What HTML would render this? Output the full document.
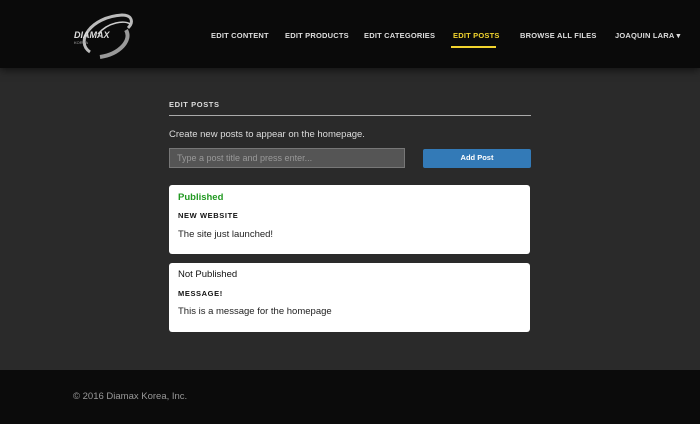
<!DOCTYPE html>
<html><head><style>
body{margin:0;width:700px;height:424px;background:#2a2a2a;font-family:"Liberation Sans",sans-serif;position:relative;overflow:hidden}
.hdr{position:absolute;left:0;top:0;width:700px;height:68px;background:#0a0a0a;box-shadow:0 2px 8px rgba(0,0,0,.6)}
.nav{position:absolute;top:31px;font-size:7.5px;font-weight:bold;color:#ddd;letter-spacing:.2px;white-space:nowrap}
.ftr{position:absolute;left:0;top:370px;width:700px;height:54px;background:#0b0b0b}
.card{position:absolute;left:169px;width:361px;background:#fff;border-radius:3px}
.st{position:absolute;left:9px;font-size:9.5px;font-weight:bold}
.tt{position:absolute;left:9px;font-size:7.5px;font-weight:bold;letter-spacing:.6px;color:#111}
.bd{position:absolute;left:9px;font-size:9.5px;color:#222}
</style></head><body>
<div class="hdr">
<svg style="position:absolute;left:70px;top:12px" width="65" height="48" viewBox="0 0 65 48">
<path d="M20 40 C5 30 20 5 52 3 C62 3 64 10 58 16" fill="none" stroke="#bbb" stroke-width="3"/>
<path d="M30 45 C50 42 62 28 56 18" fill="none" stroke="#999" stroke-width="4"/>
<path d="M28 22 C38 10 55 8 60 12" fill="none" stroke="#ccc" stroke-width="1.5"/>
<text x="4" y="26" font-size="9" font-style="italic" font-weight="bold" fill="#ddd" font-family="Liberation Sans">DIAMAX</text>
<text x="4" y="32" font-size="4" fill="#aaa" font-family="Liberation Sans">KOREA</text>
</svg>
<div class="nav" style="left:211px">EDIT CONTENT</div>
<div class="nav" style="left:285px">EDIT PRODUCTS</div>
<div class="nav" style="left:364px">EDIT CATEGORIES</div>
<div class="nav" style="left:453px;color:#f2d42e">EDIT POSTS</div>
<div style="position:absolute;left:451px;top:46px;width:45px;height:2px;background:#f2d42e"></div>
<div class="nav" style="left:520px">BROWSE ALL FILES</div>
<div class="nav" style="left:615px">JOAQUIN LARA ▾</div>
</div>
<div style="position:absolute;left:169px;top:100px;font-size:7.5px;font-weight:bold;color:#ddd;letter-spacing:.6px">EDIT POSTS</div>
<div style="position:absolute;left:169px;top:115px;width:362px;height:1px;background:#aaa"></div>
<div style="position:absolute;left:169px;top:129px;font-size:9.5px;color:#ddd">Create new posts to appear on the homepage.</div>
<div style="position:absolute;left:169px;top:148px;width:236px;height:20px;background:#555;border:1px solid #777;box-sizing:border-box;font-size:9px;color:#999;padding:4px 7px">Type a post title and press enter...</div>
<div style="position:absolute;left:423px;top:149px;width:108px;height:19px;background:#337ab7;border-radius:2px;color:#fff;font-size:7.5px;font-weight:bold;text-align:center;line-height:18px">Add Post</div>
<div class="card" style="top:185px;height:69px">
<div class="st" style="top:7px;color:#229922">Published</div>
<div class="tt" style="top:26px">NEW WEBSITE</div>
<div class="bd" style="top:44px">The site just launched!</div></div>
<div class="card" style="top:263px;height:69px">
<div class="st" style="top:6px;color:#111;font-weight:normal">Not Published</div>
<div class="tt" style="top:26px">MESSAGE!</div>
<div class="bd" style="top:43px">This is a message for the homepage</div></div>
<div class="ftr"><div style="position:absolute;left:73px;top:21px;font-size:9.5px;color:#999">© 2016 Diamax Korea, Inc.</div></div>
</body></html>
